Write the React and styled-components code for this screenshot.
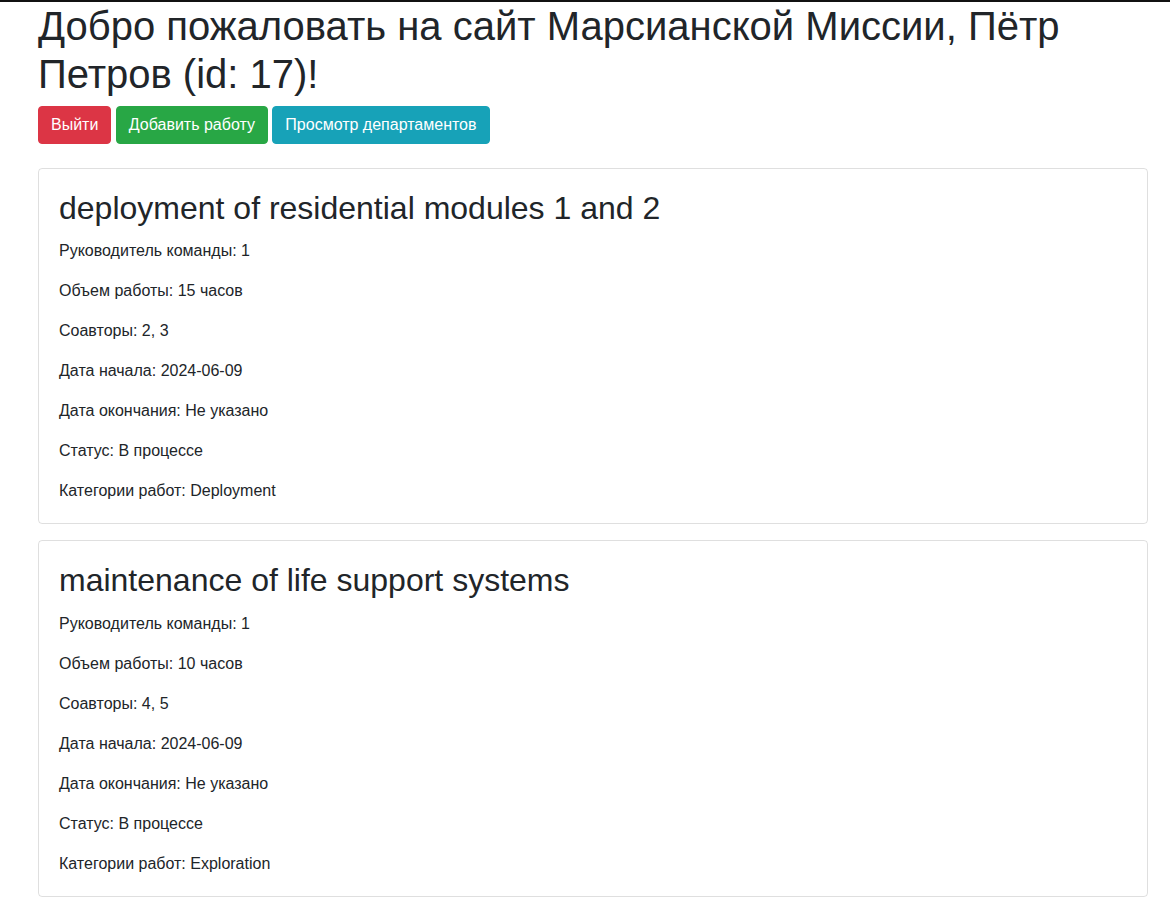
import React from 'react';
import styled, { createGlobalStyle } from 'styled-components';

const jobs = [
    {
        title: 'deployment of residential modules 1 and 2',
        leader: 1,
        size: 15,
        collaborators: '2, 3',
        start: '2024-06-09',
        end: 'Не указано',
        status: 'В процессе',
        category: 'Deployment',
    },
    {
        title: 'maintenance of life support systems',
        leader: 1,
        size: 10,
        collaborators: '4, 5',
        start: '2024-06-09',
        end: 'Не указано',
        status: 'В процессе',
        category: 'Exploration',
    },
];

const GlobalStyle = createGlobalStyle`
    html, body {
        margin: 0;
        padding: 0;
        background: #fff;
    }
    body {
        font-family: "Liberation Sans", Arial, sans-serif;
        font-size: 16px;
        line-height: 1.5;
        color: #212529;
        border-top: 2px solid #111;
    }
    * {
        box-sizing: border-box;
    }
`;

const Page = styled.div`
    width: 1110px;
    margin-left: 38px;
`;

const Title = styled.h1`
    font-size: 40px;
    font-weight: 400;
    line-height: 1.2;
    margin: 0 0 8px;
`;

const Actions = styled.div`
    display: flex;
    gap: 4.4px;
    margin-bottom: 24px;
`;

const colors = {
    danger: '#dc3545',
    success: '#28a745',
    info: '#17a2b8',
};

const Btn = styled.button`
    font-family: inherit;
    font-size: 16px;
    line-height: 1.5;
    padding: 6px 12px;
    color: #fff;
    background-color: ${(p) => colors[p.$variant]};
    border: 1px solid ${(p) => colors[p.$variant]};
    border-radius: 4px;
    cursor: pointer;
`;

const Card = styled.div`
    border: 1px solid rgba(0, 0, 0, 0.125);
    border-radius: 4px;
    padding: 20px;
    margin-bottom: 16px;
`;

const CardTitle = styled.h2`
    font-size: 32px;
    font-weight: 400;
    line-height: 1.2;
    margin: 0 0 12px;
`;

const Line = styled.p`
    margin: 0 0 16px;
    &:last-child {
        margin-bottom: 0;
    }
`;

const App = () => {
    return (
        <>
            <GlobalStyle />
            <Page>
                <Title>Добро пожаловать на сайт Марсианской Миссии, Пётр Петров (id: 17)!</Title>
                <Actions>
                    <Btn $variant="danger">Выйти</Btn>
                    <Btn $variant="success">Добавить работу</Btn>
                    <Btn $variant="info">Просмотр департаментов</Btn>
                </Actions>
                {jobs.map((job) => (
                    <Card key={job.title}>
                        <CardTitle>{job.title}</CardTitle>
                        <Line>Руководитель команды: {job.leader}</Line>
                        <Line>Объем работы: {job.size} часов</Line>
                        <Line>Соавторы: {job.collaborators}</Line>
                        <Line>Дата начала: {job.start}</Line>
                        <Line>Дата окончания: {job.end}</Line>
                        <Line>Статус: {job.status}</Line>
                        <Line>Категории работ: {job.category}</Line>
                    </Card>
                ))}
            </Page>
        </>
    );
};

export default App;
